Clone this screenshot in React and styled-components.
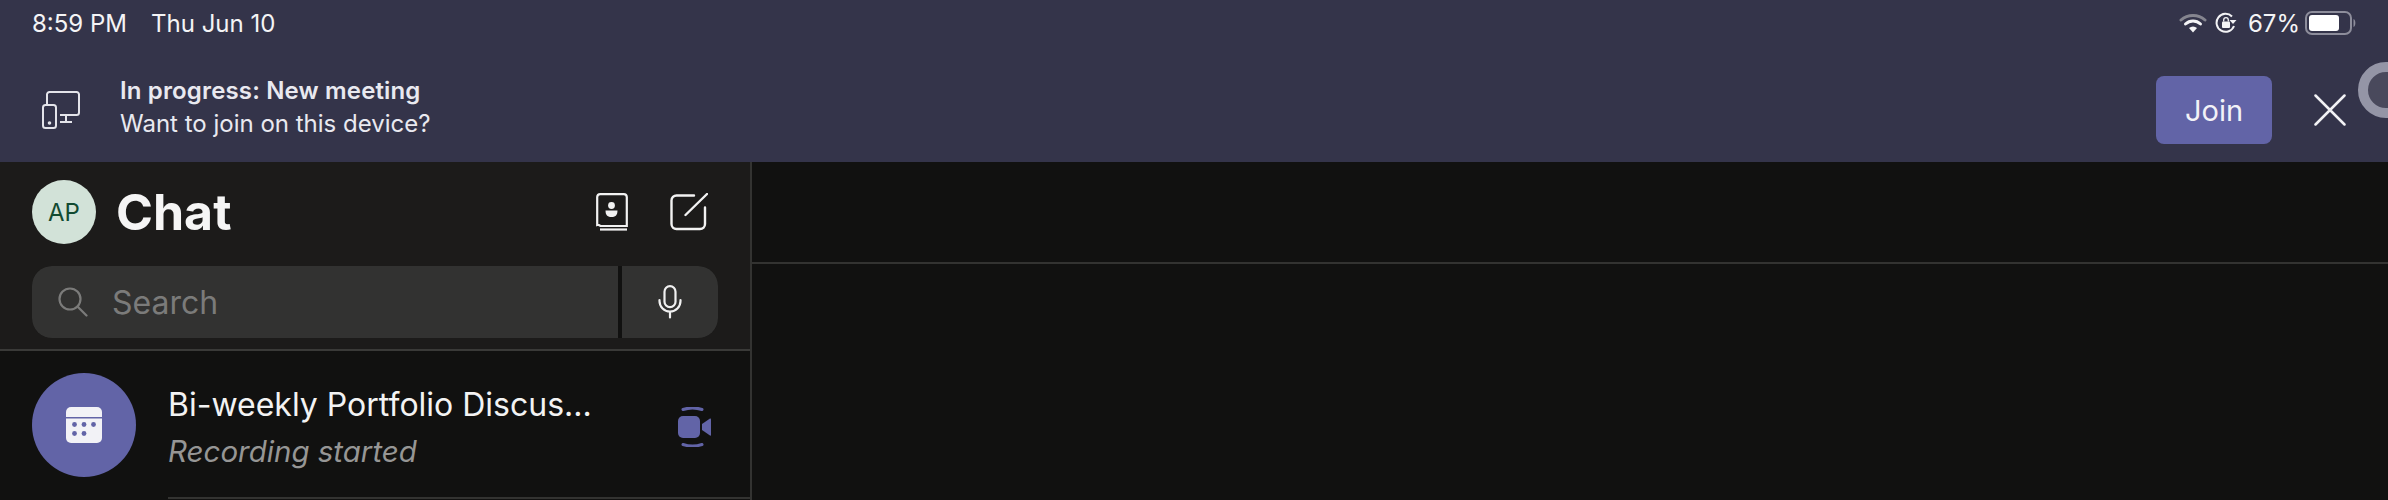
import React from 'react';
import styled, { createGlobalStyle } from 'styled-components';

const GlobalStyle = createGlobalStyle`
  html, body {
    margin: 0;
    padding: 0;
    background: #111110;
    font-family: Inter, "Liberation Sans", sans-serif;
  }
`;

const Page = styled.div`
  width: 2388px;
  height: 500px;
  overflow: hidden;
  display: flex;
  flex-direction: column;
  position: relative;
`;

const Banner = styled.div`
  height: 162px;
  flex: none;
  background: #34344a;
  display: flex;
  flex-direction: column;
`;

const StatusBar = styled.div`
  height: 46px;
  flex: none;
  display: flex;
  align-items: center;
  justify-content: space-between;
  padding: 0 32px 0 32px;
  color: #f4f4f6;
  font-size: 24px;
`;

const StatusGroup = styled.div`
  display: flex;
  align-items: center;
  gap: ${p => p.$gap}px;
`;

const BatteryLevel = styled.span`
  margin: 0 -3px 0 3px;
`;

const Notice = styled.div`
  flex: 1;
  display: flex;
  align-items: center;
  padding: 12px 42px 0 42px;
`;

const NoticeText = styled.div`
  flex: 1;
  margin: 0 0 6px 40px;
  color: #e9e9f0;
  font-size: 24px;
  line-height: 33px;
`;

const NoticeTitle = styled.div`
  font-weight: 600;
  letter-spacing: 0.15px;
`;

const JoinButton = styled.div`
  width: 116px;
  height: 68px;
  margin-right: 42px;
  border-radius: 8px;
  background: #6264a7;
  color: #f2f2f7;
  font-size: 29px;
  display: flex;
  align-items: center;
  justify-content: center;
`;

const Ring = styled.div`
  position: absolute;
  left: 2358px;
  top: 62px;
  width: 36px;
  height: 36px;
  border: 10px solid #9495a6;
  border-radius: 50%;
  background: #49495c;
`;

const Main = styled.div`
  flex: 1;
  display: flex;
  min-height: 0;
`;

const Sidebar = styled.div`
  width: 750px;
  flex: none;
  border-right: 2px solid #333331;
  display: flex;
  flex-direction: column;
`;

const SideHeader = styled.div`
  height: 189px;
  flex: none;
  box-sizing: border-box;
  background: #1c1b1a;
  border-bottom: 2px solid #3a3a38;
  padding: 18px 32px 0;
`;

const TitleRow = styled.div`
  height: 64px;
  display: flex;
  align-items: center;
`;

const Avatar = styled.div`
  width: 64px;
  height: 64px;
  border-radius: 50%;
  background: #d2e2d8;
  color: #124a31;
  font-size: 24px;
  display: flex;
  align-items: center;
  justify-content: center;
`;

const Title = styled.div`
  flex: 1;
  margin-left: 20px;
  color: #f5f5f5;
  font-size: 50px;
  font-weight: 700;
`;

const HeaderIcons = styled.div`
  display: flex;
  align-items: center;
  gap: 42px;
  margin-right: 10px;
`;

const SearchBar = styled.div`
  margin-top: 22px;
  height: 72px;
  display: flex;
  gap: 4px;
  background: #111110;
  border-radius: 20px;
  overflow: hidden;
`;

const SearchField = styled.div`
  flex: 1;
  background: #323231;
  display: flex;
  align-items: center;
  padding-left: 26px;
  color: #7b7b7a;
  font-size: 32px;
`;

const SearchLabel = styled.span`
  margin-left: 24px;
`;

const MicBox = styled.div`
  width: 96px;
  background: #323231;
  display: flex;
  align-items: center;
  justify-content: center;
`;

const ChatRow = styled.div`
  height: 149px;
  flex: none;
  padding: 0 0 1px 32px;
  display: flex;
  align-items: center;
  box-sizing: border-box;
`;

const RoundIcon = styled.div`
  width: 104px;
  height: 104px;
  flex: none;
  border-radius: 50%;
  background: #6264a7;
  display: flex;
  align-items: center;
  justify-content: center;
`;

const ChatBody = styled.div`
  flex: 1;
  margin-left: 32px;
  align-self: stretch;
  display: flex;
  align-items: center;
  border-bottom: 2px solid #333331;
  padding-right: 38px;
`;

const ChatText = styled.div`
  flex: 1;
  min-width: 0;
  padding-top: 8px;
`;

const ChatTitle = styled.div`
  color: #f3f3f3;
  font-size: 32px;
  line-height: 46px;
`;

const ChatSub = styled.div`
  color: #969695;
  font-size: 29.5px;
  font-style: italic;
  line-height: 46px;
`;

const MeetingSlot = styled.div`
  display: flex;
  margin-top: 5px;
`;

const Content = styled.div`
  flex: 1;
  background: #111110;
`;

const ContentHeader = styled.div`
  height: 100px;
  border-bottom: 2px solid #333331;
`;

const WifiIcon = () => (
  <svg width="28" height="22" viewBox="0 0 28 22" fill="none">
    <path d="M2 8 A18 18 0 0 1 26 8" stroke="#85858f" strokeWidth="3" strokeLinecap="round" />
    <path d="M6.500 12 A11 11 0 0 1 21.500 12" stroke="#f4f4f6" strokeWidth="3" strokeLinecap="round" />
    <path d="M10 16 A6 6 0 0 1 18 16 L14 20.500 Z" fill="#f4f4f6" />
  </svg>
);

const RotationLockIcon = () => (
  <svg width="22" height="22" viewBox="0 0 22 22" fill="none">
    <path d="M19 14 A9 9 0 1 1 17 4.500" stroke="#f4f4f6" strokeWidth="2" />
    <path d="M14.500 8 L21.500 8 L18 12 Z" fill="#f4f4f6" />
    <rect x="7" y="9.500" width="8" height="6.500" rx="1" fill="#f4f4f6" />
    <path d="M8.700 9.500 V8 A2.300 2.300 0 0 1 13.300 8 V9.500" stroke="#f4f4f6" strokeWidth="1.300" />
  </svg>
);

const BatteryIcon = () => (
  <svg width="51" height="24" viewBox="0 0 51 24" fill="none">
    <rect x="1" y="1" width="45" height="22" rx="6" stroke="#8d8d9b" strokeWidth="2" />
    <rect x="4" y="4" width="30" height="16" rx="3" fill="#ffffff" />
    <path d="M48.500 8 C51 9 51 15 48.500 16 Z" fill="#8d8d9b" />
  </svg>
);

const DevicesIcon = () => (
  <svg width="38" height="38" viewBox="0 0 38 38" fill="none" stroke="#e4e4ea" strokeWidth="2">
    <path d="M5 13 V3.500 A2.500 2.500 0 0 1 7.500 1 H34.500 A2.500 2.500 0 0 1 37 3.500 V21.500 A2.500 2.500 0 0 1 34.500 24 H18" />
    <rect x="1" y="14" width="13" height="23" rx="2.500" />
    <circle cx="7.500" cy="32" r="0.800" fill="#e4e4ea" />
    <path d="M24 24 V31 M18 31 H30" />
  </svg>
);

const CloseIcon = () => (
  <svg width="32" height="32" viewBox="0 0 32 32" fill="none">
    <path d="M1.500 1.500 L30.500 30.500 M30.500 1.500 L1.500 30.500" stroke="#f2f2f5" strokeWidth="2.500" strokeLinecap="round" />
  </svg>
);

const ContactsIcon = () => (
  <svg width="32" height="38" viewBox="0 0 32 38" fill="none" stroke="#f2f2f2" strokeWidth="2.200">
    <path d="M1.200 32 V4 A3 3 0 0 1 4.200 1.200 H27.800 A3 3 0 0 1 30.800 4 V33 H4.500 A3.300 3.300 0 0 0 1.200 32 Z" />
    <path d="M4 36.500 H31" />
    <circle cx="15.500" cy="12.500" r="3.400" fill="#f2f2f2" stroke="none" />
    <path d="M9.500 17.500 H21.500 C21.500 22.500 19 24 15.500 24 C12 24 9.500 22.500 9.500 17.500 Z" fill="#f2f2f2" stroke="none" />
  </svg>
);

const ComposeIcon = () => (
  <svg width="38" height="38" viewBox="0 0 38 38" fill="none" stroke="#f2f2f2" strokeWidth="2.400" strokeLinecap="round">
    <path d="M24 2.500 H6.500 A5 5 0 0 0 1.500 7.500 V31 A5 5 0 0 0 6.500 36 H30 A5 5 0 0 0 35 31 V14.500" />
    <path d="M15.500 22 L37 1" />
  </svg>
);

const SearchIcon = () => (
  <svg width="30" height="30" viewBox="0 0 30 30" fill="none" stroke="#7b7b7a" strokeWidth="2.200" strokeLinecap="round">
    <circle cx="12" cy="12" r="10.500" />
    <path d="M19.500 19.500 L28.500 28.500" />
  </svg>
);

const MicIcon = () => (
  <svg width="24" height="34" viewBox="0 0 24 34" fill="none" stroke="#f0f0f0" strokeWidth="2.200" strokeLinecap="round">
    <rect x="6.500" y="1.200" width="11" height="21" rx="5.500" />
    <path d="M1.500 15 V16 A10.500 10.500 0 0 0 22.500 16 V15 M12 27 V32.500" />
  </svg>
);

const CalendarIcon = () => (
  <svg width="36" height="36" viewBox="0 0 36 36">
    <path d="M0 10 V5 A5 5 0 0 1 5 0 H31 A5 5 0 0 1 36 5 V10 Z" fill="#f2f2f6" />
    <path d="M0 11.500 H36 V31 A5 5 0 0 1 31 36 H5 A5 5 0 0 1 0 31 Z" fill="#f2f2f6" />
    <g fill="#6264a7">
      <circle cx="8.500" cy="17.500" r="2.400" />
      <circle cx="18" cy="17.500" r="2.400" />
      <circle cx="27.500" cy="17.500" r="2.400" />
      <circle cx="8.500" cy="26.500" r="2.400" />
      <circle cx="18" cy="26.500" r="2.400" />
    </g>
  </svg>
);

const MeetingIcon = () => (
  <svg width="34" height="40" viewBox="0 0 34 40" fill="none">
    <path d="M5 2.500 C11 0.500 18 0.500 24 2.500" stroke="#6264a7" strokeWidth="3" strokeLinecap="round" />
    <path d="M5 37.500 C11 39.500 18 39.500 24 37.500" stroke="#6264a7" strokeWidth="3" strokeLinecap="round" />
    <rect x="0" y="9" width="22" height="22" rx="5" fill="#6264a7" />
    <path d="M24 17 L32 11.500 Q33 11 33 12.500 V28 Q33 29 32 28.500 L24 23 Z" fill="#6264a7" />
  </svg>
);

export default function App() {
  return (
    <Page>
      <GlobalStyle />
      <Banner>
        <StatusBar>
          <StatusGroup $gap={24}>
            <span>8:59 PM</span>
            <span>Thu Jun 10</span>
          </StatusGroup>
          <StatusGroup $gap={8}>
            <WifiIcon />
            <RotationLockIcon />
            <BatteryLevel>67%</BatteryLevel>
            <BatteryIcon />
          </StatusGroup>
        </StatusBar>
        <Notice>
          <DevicesIcon />
          <NoticeText>
            <NoticeTitle>In progress: New meeting</NoticeTitle>
            <div>Want to join on this device?</div>
          </NoticeText>
          <JoinButton>Join</JoinButton>
          <CloseIcon />
        </Notice>
      </Banner>
      <Ring />
      <Main>
        <Sidebar>
          <SideHeader>
            <TitleRow>
              <Avatar>AP</Avatar>
              <Title>Chat</Title>
              <HeaderIcons>
                <ContactsIcon />
                <ComposeIcon />
              </HeaderIcons>
            </TitleRow>
            <SearchBar>
              <SearchField>
                <SearchIcon />
                <SearchLabel>Search</SearchLabel>
              </SearchField>
              <MicBox>
                <MicIcon />
              </MicBox>
            </SearchBar>
          </SideHeader>
          <ChatRow>
            <RoundIcon>
              <CalendarIcon />
            </RoundIcon>
            <ChatBody>
              <ChatText>
                <ChatTitle>Bi-weekly Portfolio Discus...</ChatTitle>
                <ChatSub>Recording started</ChatSub>
              </ChatText>
              <MeetingSlot>
                <MeetingIcon />
              </MeetingSlot>
            </ChatBody>
          </ChatRow>
        </Sidebar>
        <Content>
          <ContentHeader />
        </Content>
      </Main>
    </Page>
  );
}
